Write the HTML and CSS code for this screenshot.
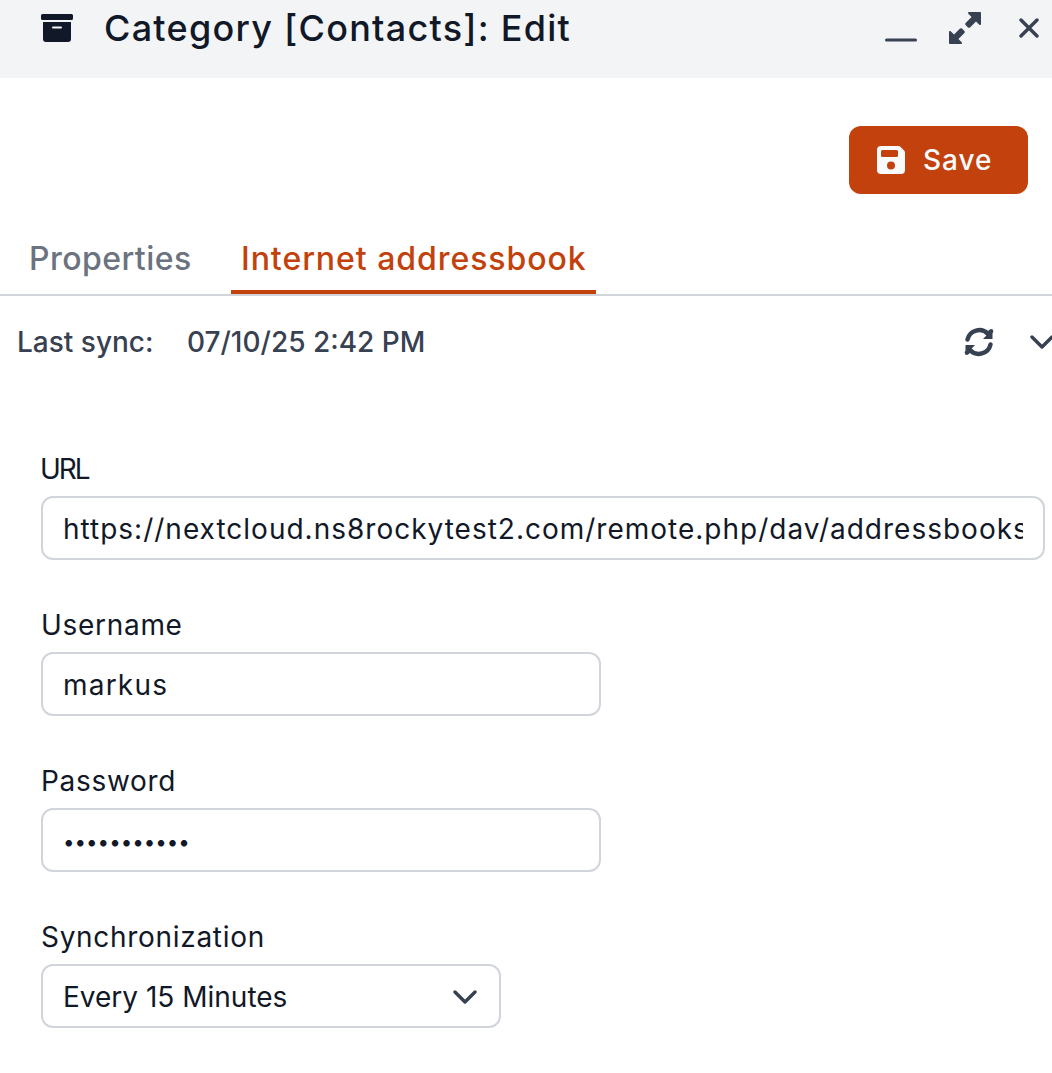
FILE: index.html
```html
<!DOCTYPE html>
<html lang="en">
  <head>
    <meta charset="UTF-8" />
    <title>Category [Contacts]: Edit</title>
    <link rel="stylesheet" href="styles.css">
  </head>
  <body>
    <header class="titlebar">
      <svg class="title-icon" viewBox="0 0 32 28"><path d="M1.5 0h29A1.5 1.5 0 0 1 32 1.500v3A1.500 1.500 0 0 1 30.500 6h-29A1.500 1.500 0 0 1 0 4.500v-3A1.500 1.500 0 0 1 1.500 0zM2 8h28v17a3 3 0 0 1-3 3H5a3 3 0 0 1-3-3zm10 4.500a1 1 0 0 0 0 2h8a1 1 0 0 0 0-2z" fill-rule="evenodd"/></svg>
      <h1>Category [Contacts]: Edit</h1>
      <div class="window-buttons">
        <svg class="win-min" viewBox="0 0 32 4"><rect width="32" height="3" y="0.500" rx="1.500"/></svg>
        <svg class="win-max" viewBox="0 0 32 32"><path d="M20 0h11a1 1 0 0 1 1 1v11a1 1 0 0 1-1.700.700l-3.300-3.300-6 6a1.500 1.500 0 0 1-2 0l-2.400-2.400a1.500 1.500 0 0 1 0-2l6-6-3.300-3.300A1 1 0 0 1 20 0zM12 32H1a1 1 0 0 1-1-1V20a1 1 0 0 1 1.700-.700l3.300 3.300 6-6a1.500 1.500 0 0 1 2 0l2.400 2.400a1.500 1.500 0 0 1 0 2l-6 6 3.300 3.300A1 1 0 0 1 12 32z"/></svg>
        <svg class="win-close" viewBox="0 0 20 20"><path d="M2 2l16 16M18 2L2 18" fill="none" stroke-width="3.400" stroke-linecap="round"/></svg>
      </div>
    </header>

    <div class="toolbar">
      <button class="save-btn">
        <svg viewBox="0 0 28 28"><path d="M4 0h17.500a3 3 0 0 1 2.100.900l3.500 3.500a3 3 0 0 1 .900 2.100V24a4 4 0 0 1-4 4H4a4 4 0 0 1-4-4V4a4 4 0 0 1 4-4zm1.500 4A1.500 1.500 0 0 0 4 5.500v4A1.500 1.500 0 0 0 5.500 11h14A1.500 1.500 0 0 0 21 9.500v-4A1.500 1.500 0 0 0 19.500 4zM14 15.500a4 4 0 1 0 0 8 4 4 0 0 0 0-8z" fill-rule="evenodd"/></svg>
        <span>Save</span>
      </button>
    </div>

    <nav class="tabs">
      <a class="tab tab-first">Properties</a>
      <a class="tab active">Internet addressbook</a>
    </nav>

    <div class="sync-row">
      <span class="sync-label">Last sync:</span>
      <span class="sync-date">07/10/25 2:42 PM</span>
      <svg class="sync-icon" viewBox="0 0 30 30"><path d="M3.500 12.500A12 12 0 0 1 24 7l3-2.600M26.500 17.500A12 12 0 0 1 6 23l-3 2.600" fill="none" stroke-width="4.400" stroke-linecap="round"/><path d="M28.500 2v10h-9.500zM1.500 28V18H11z" class="solid"/></svg>
      <svg class="sync-chevron" viewBox="0 0 24 16"><path d="M2 3l10 10L22 3" fill="none" stroke-width="3.400" stroke-linecap="round" stroke-linejoin="round"/></svg>
    </div>

    <form class="form">
      <div class="field">
        <label class="label-short">URL</label>
        <input class="input input-url" type="text" value="https://nextcloud.ns8rockytest2.com/remote.php/dav/addressbooks/users/markus/contacts/">
      </div>
      <div class="field">
        <label>Username</label>
        <input class="input input-mid" type="text" value="markus">
      </div>
      <div class="field">
        <label>Password</label>
        <input class="input input-mid input-pass" type="password" value="secretpass1">
      </div>
      <div class="field">
        <label>Synchronization</label>
        <div class="select">
          <span>Every 15 Minutes</span>
          <svg viewBox="0 0 24 16"><path d="M2 3l10 10L22 3" fill="none" stroke-width="3.400" stroke-linecap="round" stroke-linejoin="round"/></svg>
        </div>
      </div>
    </form>
  </body>
</html>
```

FILE: styles.css
```css
* {
  box-sizing: border-box;
}

html,
body {
  margin: 0;
  height: 100%;
  overflow: hidden;
}

body {
  background-color: #fff;
  color: #111827;
  font-family: "Inter", "Open Sans", sans-serif;
}

.titlebar {
  height: 78px;
  background-color: #f3f4f6;
  display: flex;
  align-items: flex-start;
  padding: 14px 0 0 41px;
}

.title-icon {
  width: 32px;
  height: 28px;
  fill: #111827;
}

h1 {
  margin: -7px 0 0 31px;
  font-size: 36px;
  line-height: 42px;
  font-weight: 500;
  letter-spacing: 1.25px;
  white-space: nowrap;
}

.window-buttons {
  margin-left: auto;
  display: flex;
  align-items: flex-start;
  padding-right: 13px;
}

.window-buttons svg {
  fill: #374151;
  stroke: #374151;
  stroke-width: 0;
}

.win-min {
  width: 32px;
  height: 4px;
  margin-top: 24px;
}

.win-max {
  width: 32px;
  height: 32px;
  margin-left: 32px;
  margin-top: -2px;
}

.window-buttons .win-close {
  width: 20px;
  height: 20px;
  margin-left: 38px;
  margin-top: 4px;
  stroke-width: 3.400;
}

.toolbar {
  display: flex;
  justify-content: flex-end;
  padding: 48px 24px 0 0;
}

.save-btn {
  width: 179px;
  height: 68px;
  border: 0;
  border-radius: 12px;
  background-color: #c2410c;
  color: #f9fafb;
  font: 500 28px "Inter", sans-serif;
  letter-spacing: 1px;
  display: flex;
  align-items: center;
  gap: 18px;
  padding: 0 0 0 28px;
}

.save-btn svg {
  width: 28px;
  height: 28px;
  fill: #f9fafb;
}

.tabs {
  display: flex;
  height: 68px;
  margin-top: 34px;
  border-bottom: 2px solid #d1d5db;
  padding-left: 10px;
}

.tab {
  height: 66px;
  padding: 0 10px;
  font-size: 32px;
  line-height: 62px;
  font-weight: 500;
  color: #6b7280;
  white-space: nowrap;
}

.tab-first {
  width: 221px;
  padding-left: 19px;
  letter-spacing: 0.45px;
}

.tab.active {
  width: 365px;
  color: #c2410c;
  letter-spacing: 0.95px;
  border-bottom: 4px solid #c2410c;
}

.sync-row {
  display: flex;
  align-items: center;
  height: 92px;
  margin-top: 1px;
  padding-bottom: 2px;
  padding-left: 17px;
  font-size: 28px;
  font-weight: 500;
  color: #374151;
}

.sync-label {
  width: 170px;
}

.sync-icon {
  width: 30px;
  height: 30px;
  margin-left: auto;
  stroke: #374151;
  fill: none;
}

.sync-icon .solid {
  fill: #374151;
  stroke: none;
}

.sync-chevron {
  width: 24px;
  height: 16px;
  margin-left: 36px;
  margin-right: -2px;
  stroke: #374151;
  flex-shrink: 0;
}

.form {
  padding: 61px 7px 0 41px;
  display: flex;
  flex-direction: column;
  gap: 46px;
}

.field label {
  display: block;
  font-size: 28px;
  line-height: 38px;
  letter-spacing: 0.7px;
  color: #111827;
  margin-bottom: 8px;
}

.field .label-short {
  letter-spacing: -2px;
  margin-left: -1px;
}

.input,
.select {
  display: block;
  height: 64px;
  border: 2px solid #d1d5db;
  border-radius: 12px;
  padding: 2px 20px 0;
  font: 400 28px "Inter", sans-serif;
  color: #111827;
  background-color: #fff;
}

.input-url {
  width: 100%;
  letter-spacing: 1px;
}

.input-mid {
  width: 560px;
  letter-spacing: 1.2px;
}

.input-pass {
  font-size: 20.500px;
  letter-spacing: 0;
}

.select {
  width: 460px;
  display: flex;
  align-items: center;
  justify-content: space-between;
  padding-right: 22px;
}

.select svg {
  width: 24px;
  height: 16px;
  stroke: #374151;
}
```
